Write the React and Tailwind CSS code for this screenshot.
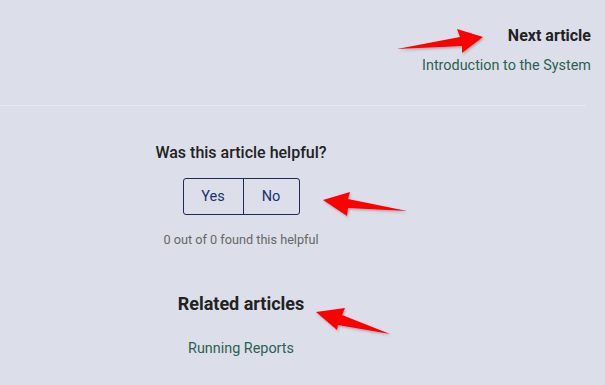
import React from "react";

function Arrow({ points }) {
  return (
    <svg className="absolute left-0 top-0 pointer-events-none" width="605" height="385" viewBox="0 0 605 385">
      <defs>
        <filter id="sh" x="-20%" y="-20%" width="140%" height="140%">
          <feDropShadow dx="1" dy="1.5" stdDeviation="1.2" floodColor="#000" floodOpacity="0.25" />
        </filter>
      </defs>
      <polygon points={points} fill="#ff0000" filter="url(#sh)" />
    </svg>
  );
}

export default function App() {
  return (
    <div className="relative w-[605px] h-[385px] overflow-hidden bg-[#dcdfea] font-['Roboto',sans-serif]">
      {/* next article */}
      <div className="h-[105px] pr-[14px] pt-[25px] text-right">
        <div className="text-[16px] font-bold leading-[22px] text-[#222]">Next article</div>
        <div className="mt-[9px] text-[14.4px] leading-[20px] text-[#2c5f52]">Introduction to the System</div>
      </div>
      <div className="w-[586px] border-t border-[#e7e9f1]" />

      {/* feedback + related */}
      <div className="w-[482px] flex flex-col items-center pt-[36px]">
        <div className="text-[16px] font-medium leading-[22px] text-[#222]">Was this article helpful?</div>
        <div className="mt-[14px] flex h-[37px] rounded-[3px] border border-[#1e2a5a] text-[14.5px] text-[#1b2f6e]">
          <button className="w-[60px] border-r border-[#1e2a5a]">Yes</button>
          <button className="w-[55px]">No</button>
        </div>
        <div className="mt-[16px] text-[12.7px] leading-[17px] text-[#666]">0 out of 0 found this helpful</div>
        <div className="mt-[43px] text-[18px] font-bold leading-[26px] text-[#222]">Related articles</div>
        <div className="mt-[22px] text-[14.4px] leading-[20px] text-[#2c5f52]">Running Reports</div>
      </div>

      <Arrow points="397,49 460,37 457,29 483,37 462,53 462,46" />
      <Arrow points="323,200 350,192 348,199 407,211 348,208 347,216" />
      <Arrow points="316,312 345,308 342,315 390,334 338,325 337,330" />
    </div>
  );
}
